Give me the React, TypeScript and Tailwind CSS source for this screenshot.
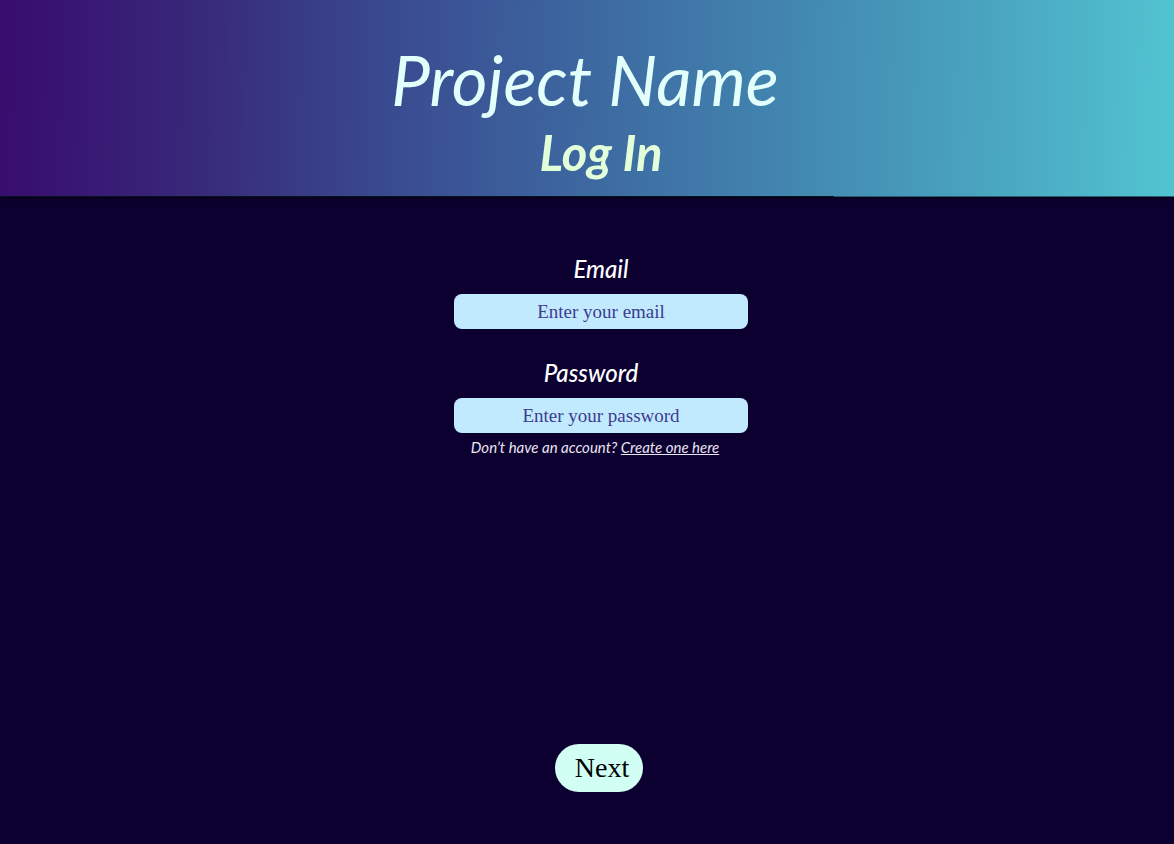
import { useState } from "react";
import type { InputHTMLAttributes } from "react";

type FieldProps = InputHTMLAttributes<HTMLInputElement> & {
  id: string;
  label: string;
  labelClass?: string;
};

function Field({ id, label, labelClass = "", ...input }: FieldProps) {
  return (
    <div className="flex flex-col gap-[9px]">
      <label
        htmlFor={id}
        className={`text-center text-2xl font-medium italic text-white ${labelClass}`}
      >
        {label}
      </label>
      <input
        id={id}
        className="h-[35px] w-full rounded-lg bg-[#c2eaff] text-center font-['Liberation_Serif',serif] text-[19px] text-[#2c2c84] outline-none placeholder:text-[#3c3c90]"
        {...input}
      />
    </div>
  );
}

export default function App() {
  const [email, setEmail] = useState("");
  const [password, setPassword] = useState("");

  return (
    <div className="flex min-h-screen flex-col bg-[#0c0030] font-['Lato',sans-serif]">
      <header className="relative border-b border-[#07101c] bg-[linear-gradient(91deg,#380c6e_0%,#38297a_17%,#394a90_33%,#3d68a0_50%,#4286b0_67%,#49a3bf_83%,#52c4d1_100%)] pt-10 pb-3 text-center italic shadow-[0_2px_4px_rgba(0,0,0,0.4)]">
        <h1 className="pr-1 text-[69px] leading-20 text-[#e2fffb]">Project Name</h1>
        <h2 className="pl-7 text-[49px] leading-16 font-bold text-[#e2ffd9]">Log In</h2>
        <span className="absolute top-full right-0 h-px w-[29%] bg-[#2a5a6c]" />
      </header>

      <form
        className="flex flex-1 flex-col items-center pt-14 pb-13 pl-7"
        onSubmit={(event) => event.preventDefault()}
      >
        <div className="flex w-full max-w-[294px] flex-col gap-7">
          <Field
            id="email"
            label="Email"
            type="email"
            placeholder="Enter your email"
            value={email}
            onChange={(event) => setEmail(event.target.value)}
          />
          <Field
            id="password"
            label="Password"
            labelClass="pr-5"
            type="password"
            placeholder="Enter your password"
            value={password}
            onChange={(event) => setPassword(event.target.value)}
          />
        </div>
        <p className="mt-1 pr-3 text-[15px] leading-5 italic text-[#e8e4f0]">
          Don’t have an account?{" "}
          <a href="#create" className="underline">
            Create one here
          </a>
        </p>
        <button
          type="submit"
          className="mt-auto mr-1 rounded-full bg-[#d2fff3] py-1 pr-[14px] pl-5 font-['Liberation_Serif',serif] text-[28px] leading-10 text-black"
        >
          Next
        </button>
      </form>
    </div>
  );
}
